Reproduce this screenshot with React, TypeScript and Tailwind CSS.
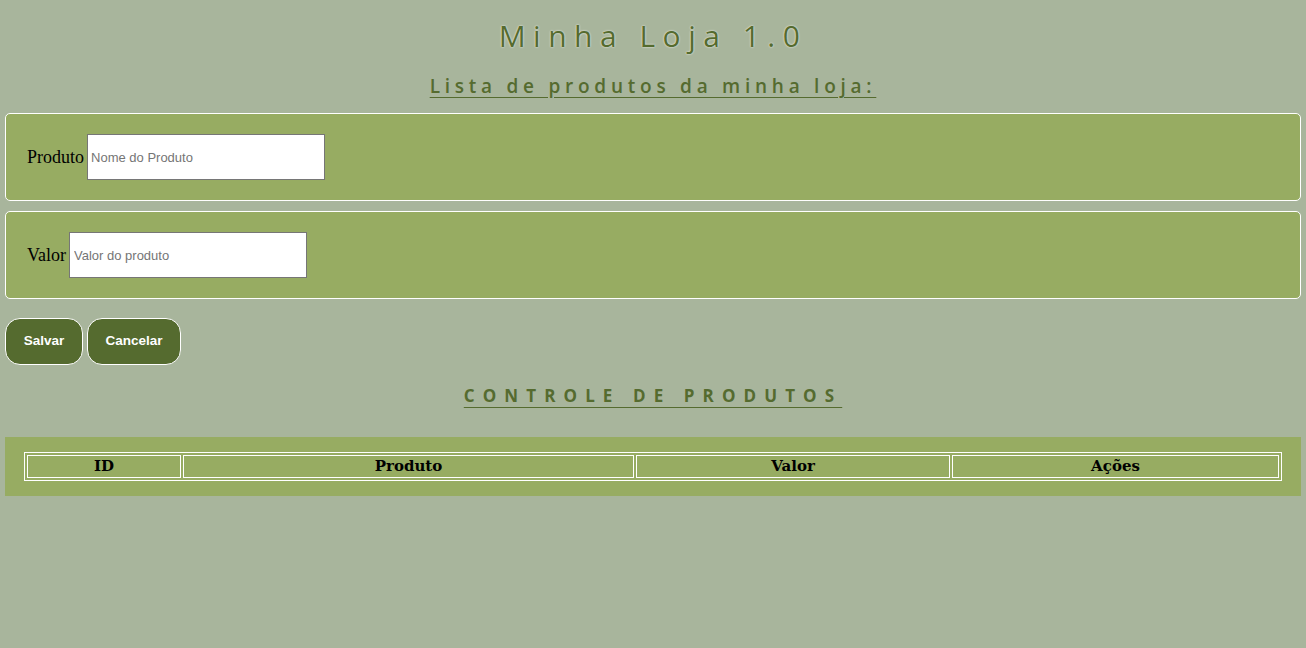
import React, { useState } from 'react';

export default function App() {
  const [nome, setNome] = useState('');
  const [valor, setValor] = useState('');

  return (
    <div className="min-h-[648px] bg-[#a8b59c] px-[5px] pt-[17px] pb-6 font-['Liberation_Serif',serif]">
      {/* Titulo */}
      <h1 className="text-center text-[30px] leading-[38px] tracking-[7.5px] text-[#556b2f] font-['Open_Sans',sans-serif] [text-shadow:0_0_2px_#fff]">
        Minha Loja 1.0
      </h1>
      <h2 className="mt-[18px] text-center text-[19px] leading-[26px] font-semibold tracking-[4.75px] text-[#556b2f] underline underline-offset-[4px] font-['Open_Sans',sans-serif]">
        Lista de produtos da minha loja:
      </h2>

      {/* Formulario */}
      <form className="mt-[14px]" onSubmit={(e) => e.preventDefault()}>
        <div className="flex items-center h-[88px] px-[21px] bg-[#97ac62] border border-white rounded-[5px]">
          <label className="text-[18px] text-black">Produto</label>
          <input
            value={nome}
            onChange={(e) => setNome(e.target.value)}
            placeholder="Nome do Produto"
            className="ml-[3px] w-[238px] h-[46px] px-[3px] bg-white border border-[#767676] text-[13px] font-['Liberation_Sans',sans-serif] placeholder:text-[#757575] outline-none"
          />
        </div>
        <div className="mt-[10px] flex items-center h-[88px] px-[21px] bg-[#97ac62] border border-white rounded-[5px]">
          <label className="text-[18px] text-black">Valor</label>
          <input
            value={valor}
            onChange={(e) => setValor(e.target.value)}
            placeholder="Valor do produto"
            className="ml-[3px] w-[238px] h-[46px] px-[4px] bg-white border border-[#767676] text-[13px] font-['Liberation_Sans',sans-serif] placeholder:text-[#757575] outline-none"
          />
        </div>

        {/* Botoes */}
        <div className="mt-[19px] flex gap-[4px]">
          <button
            type="submit"
            className="w-[78px] h-[47px] rounded-[15px] border border-white bg-[#556b2f] text-white text-[13.5px] font-bold font-['Liberation_Sans',sans-serif]"
          >
            Salvar
          </button>
          <button
            type="button"
            onClick={() => { setNome(''); setValor(''); }}
            className="w-[94px] h-[47px] rounded-[15px] border border-white bg-[#556b2f] text-white text-[13.5px] font-bold font-['Liberation_Sans',sans-serif]"
          >
            Cancelar
          </button>
        </div>
      </form>

      <h2 className="mt-[18px] text-center text-[17px] leading-[26px] font-bold tracking-[8.1px] text-[#556b2f] underline underline-offset-[5px] font-['Open_Sans',sans-serif]">
        CONTROLE DE PRODUTOS
      </h2>

      {/* Tabela */}
      <div className="mt-[28px] bg-[#97ac62] px-[19px] py-[15px]">
        <table className="w-[1258px] border border-white border-separate border-spacing-[2px]">
          <thead>
            <tr className="h-[23px]">
              <th className="w-[154px] p-0 border border-white text-[15px] leading-[19px] font-bold text-black font-['DejaVu_Serif',serif]">ID</th>
              <th className="w-[451px] p-0 border border-white text-[15px] leading-[19px] font-bold text-black font-['DejaVu_Serif',serif]">Produto</th>
              <th className="w-[314px] p-0 border border-white text-[15px] leading-[19px] font-bold text-black font-['DejaVu_Serif',serif]">Valor</th>
              <th className="p-0 border border-white text-[15px] leading-[19px] font-bold text-black font-['DejaVu_Serif',serif]">Ações</th>
            </tr>
          </thead>
          <tbody></tbody>
        </table>
      </div>
    </div>
  );
}
